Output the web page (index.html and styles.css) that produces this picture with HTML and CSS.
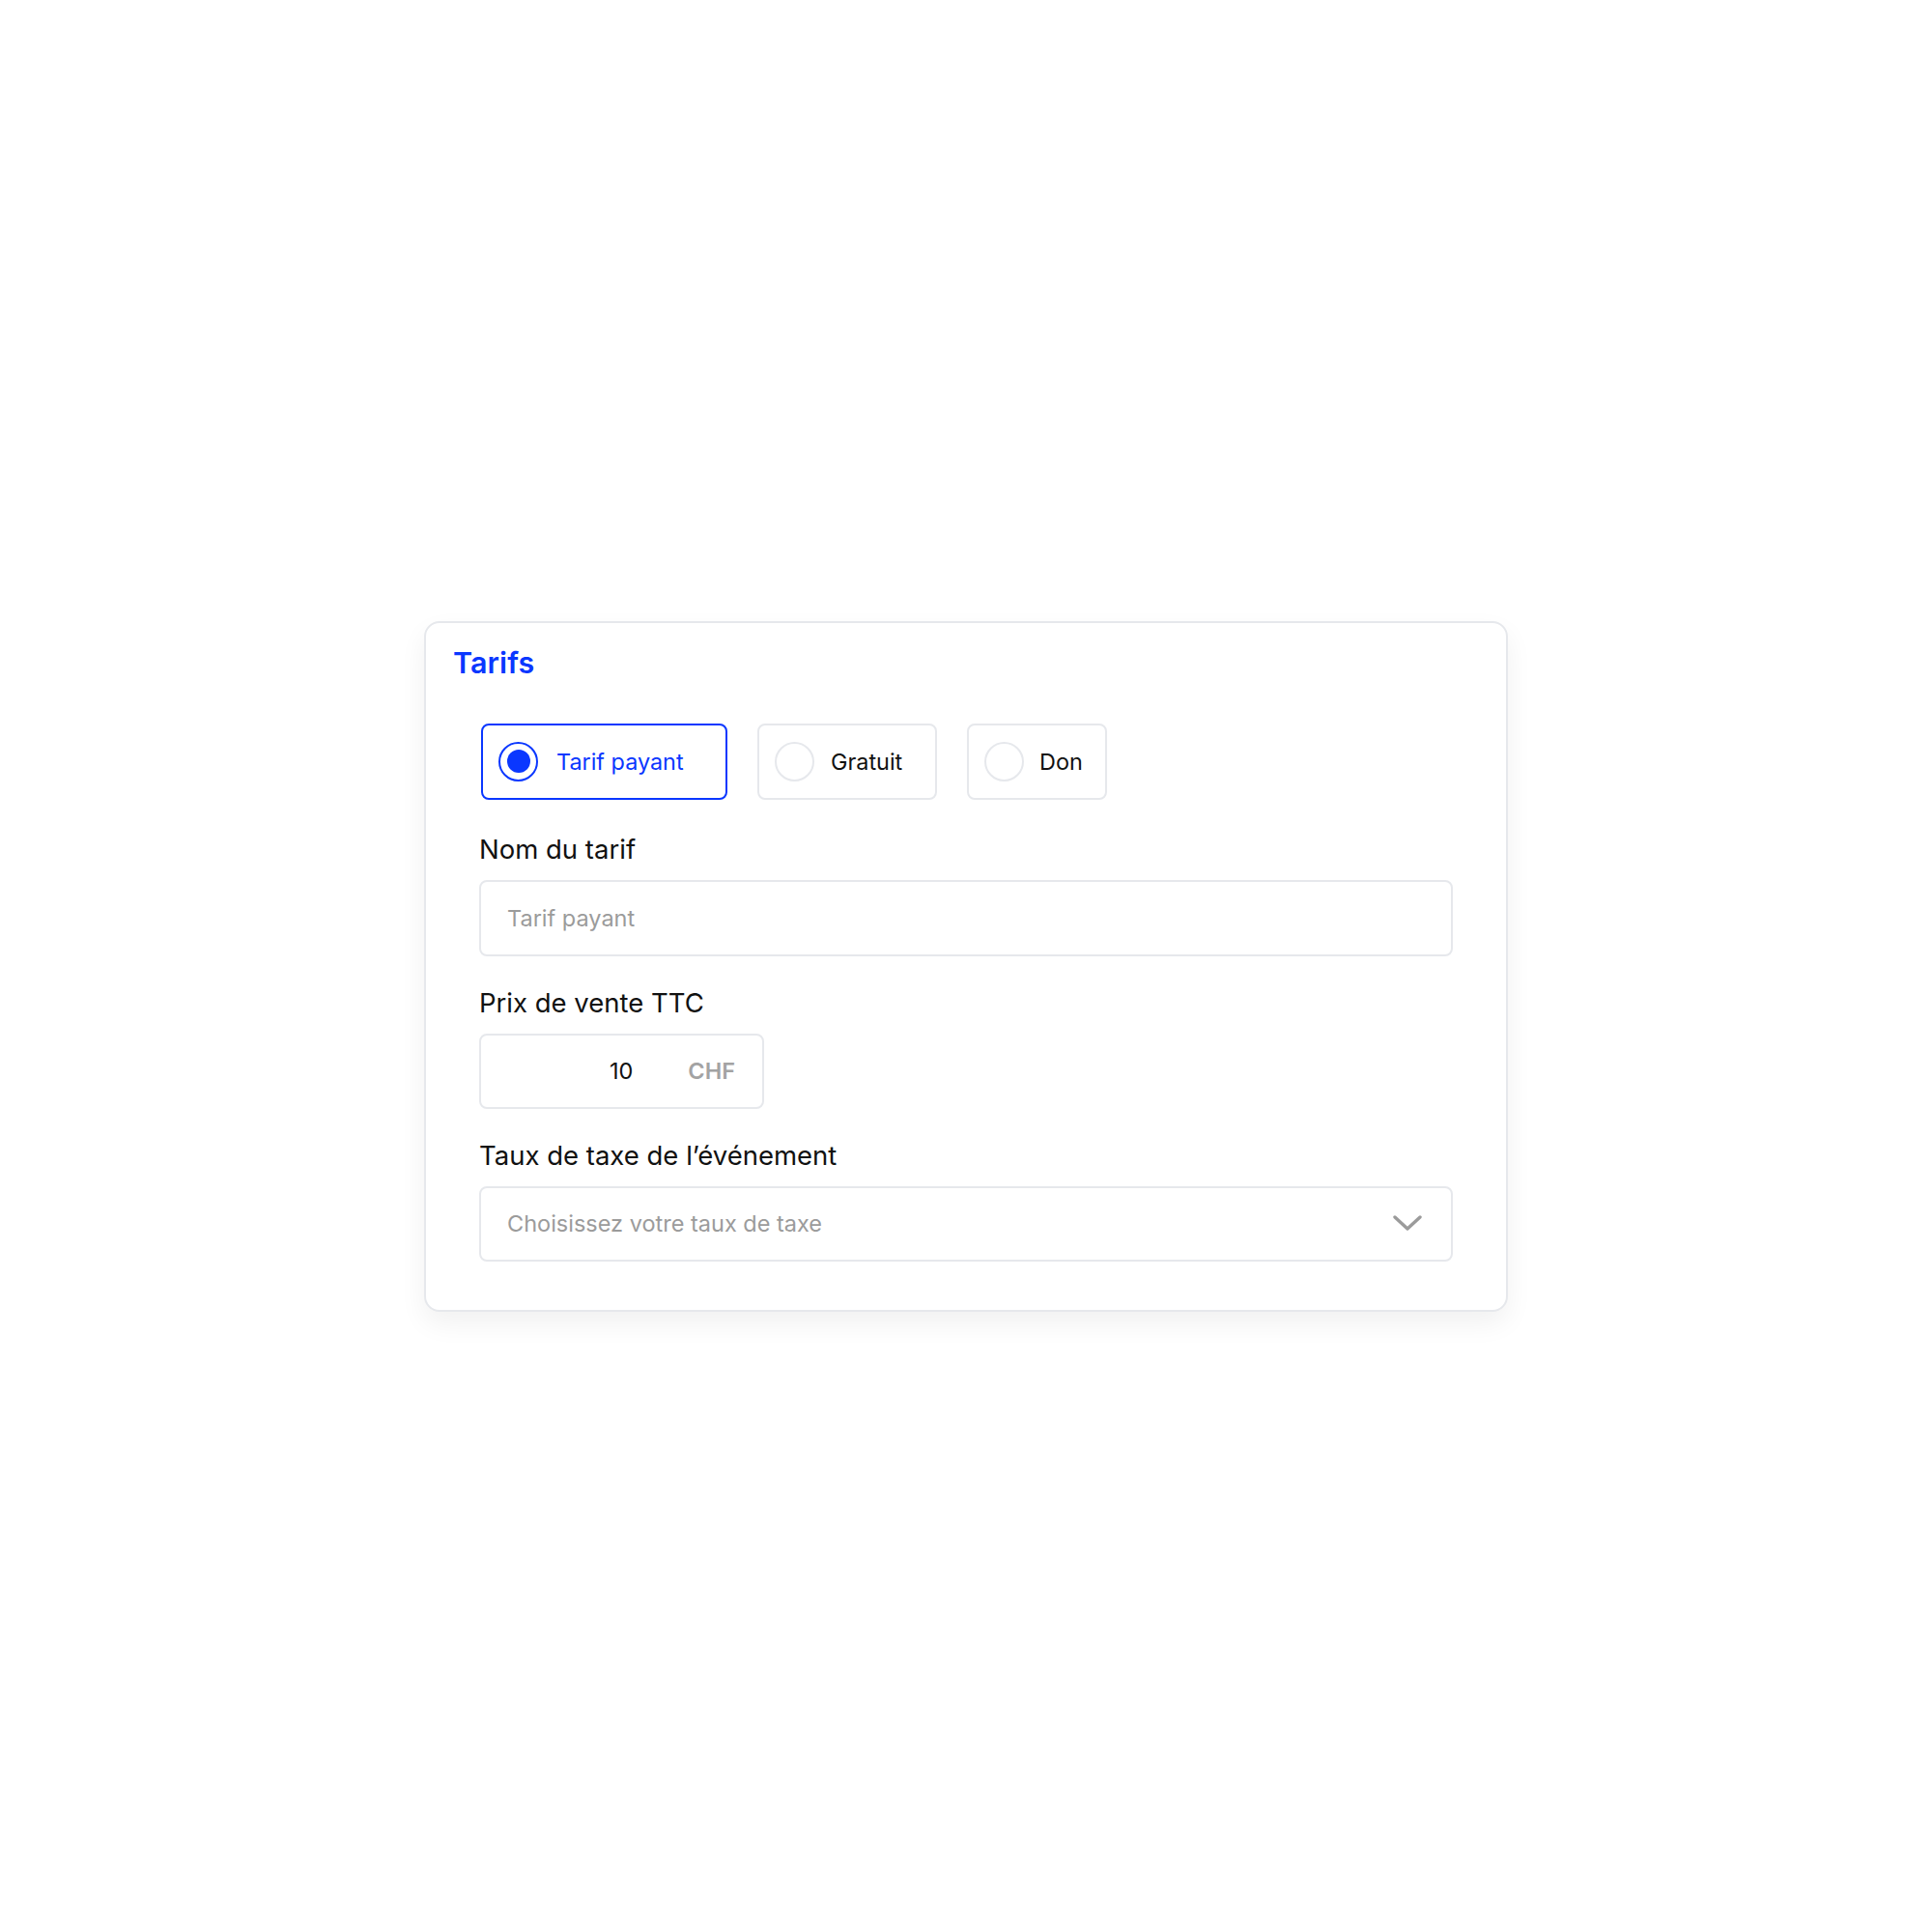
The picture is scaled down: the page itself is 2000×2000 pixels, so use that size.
FILE: index.html
```html
<!DOCTYPE html>
<html lang="fr">
<head>
<meta charset="utf-8">
<title>Tarifs</title>
<link rel="stylesheet" href="styles.css">
</head>
<body>
<div class="page">
  <section class="card">
    <h2 class="title">Tarifs</h2>
    <div class="content">
      <div class="options">
        <div class="option option--paid is-selected">
          <span class="radio"><span class="radio-dot"></span></span>
          <span class="option-text">Tarif payant</span>
        </div>
        <div class="option option--free">
          <span class="radio"></span>
          <span class="option-text">Gratuit</span>
        </div>
        <div class="option option--don">
          <span class="radio"></span>
          <span class="option-text">Don</span>
        </div>
      </div>

      <div class="field field--first">
        <div class="label">Nom du tarif</div>
        <div class="input"><span class="placeholder">Tarif payant</span></div>
      </div>

      <div class="field">
        <div class="label">Prix de vente TTC</div>
        <div class="input input--price">
          <span class="price-value">10</span>
          <span class="currency">CHF</span>
        </div>
      </div>

      <div class="field">
        <div class="label">Taux de taxe de l’événement</div>
        <div class="input input--select">
          <span class="placeholder">Choisissez votre taux de taxe</span>
          <svg class="chevron" width="30" height="17" viewBox="0 0 30 17" aria-hidden="true">
            <path d="M2 2 L15 14 L28 2" fill="none" stroke="#9b9b9b" stroke-width="3.4" stroke-linecap="round" stroke-linejoin="round"/>
          </svg>
        </div>
      </div>
    </div>
  </section>
</div>
</body>
</html>
```

FILE: styles.css
```css
* {
  box-sizing: border-box;
}

html, body {
  margin: 0;
  padding: 0;
  background: #ffffff;
}

body {
  font-family: "Inter", "Noto Sans", "Liberation Sans", sans-serif;
  color: #111111;
}

.page {
  min-height: 100vh;
  display: flex;
  align-items: center;
  justify-content: center;
}

.card {
  width: 1122px;
  border: 2px solid #e6e8ec;
  border-radius: 16px;
  background: #ffffff;
  padding: 21px 28px 50px;
  box-shadow: 0 12px 28px rgba(0, 0, 0, 0.06);
}

.title {
  margin: 0;
  font-size: 30.5px;
  line-height: 40px;
  font-weight: 600;
  color: #0a37ff;
  letter-spacing: 0.1px;
}

.content {
  padding: 0 27px;
  margin-top: 43px;
}

.options {
  display: flex;
  gap: 31px;
  margin-left: 2px;
}

.option {
  height: 79px;
  border: 2px solid #e6e8ec;
  border-radius: 8px;
  display: flex;
  align-items: center;
  padding-left: 16px;
  gap: 19px;
  font-size: 23.4px;
  color: #111111;
}

.option--paid {
  width: 255px;
}

.option--free {
  width: 186px;
  gap: 17px;
}

.option--don {
  width: 145px;
  gap: 16px;
}

.option.is-selected {
  border-color: #0a37ff;
  color: #0a37ff;
}

.radio {
  width: 41px;
  height: 41px;
  border-radius: 50%;
  border: 2px solid #e6e8ec;
  display: flex;
  align-items: center;
  justify-content: center;
  flex: none;
}

.is-selected .radio {
  border: 2.5px solid #0a37ff;
}

.radio-dot {
  width: 24px;
  height: 24px;
  border-radius: 50%;
  background: #0a37ff;
}

.field {
  margin-top: 32px;
}

.field--first {
  margin-top: 35px;
}

.label {
  font-size: 27.5px;
  line-height: 32px;
  margin-bottom: 16px;
  color: #111111;
}

.input {
  height: 79px;
  border: 2px solid #e6e8ec;
  border-radius: 8px;
  display: flex;
  align-items: center;
  padding: 0 28px 0 27px;
  font-size: 23.5px;
}

.placeholder {
  color: #9b9b9b;
}

.input--price {
  width: 295px;
  height: 78px;
  justify-content: flex-end;
  gap: 57px;
}

.price-value {
  color: #111111;
}

.currency {
  color: #a3a3a3;
  font-weight: 600;
}

.input--select {
  height: 78px;
  justify-content: space-between;
  padding-right: 30px;
}

.chevron {
  display: block;
}
```
